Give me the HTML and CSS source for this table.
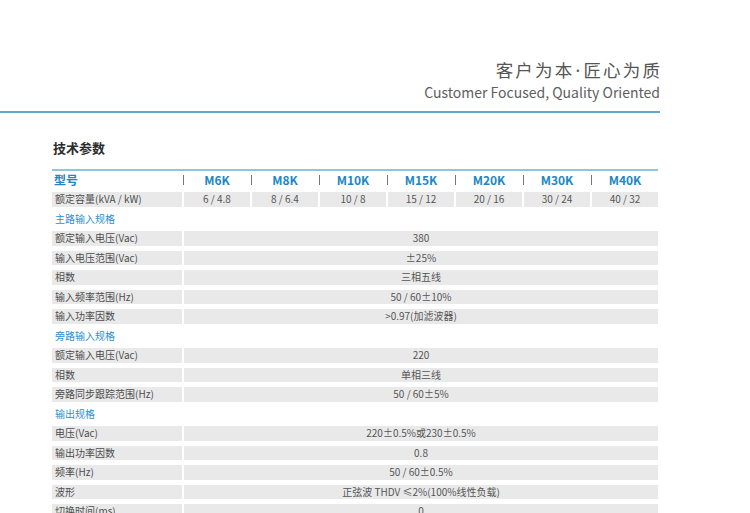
FILE: index.html
```html
<!DOCTYPE html>
<html lang="zh">
<head>
<meta charset="utf-8">
<link rel="stylesheet" href="styles.css">
</head>
<body>
<div class="page">
  <header class="top">
    <div class="slogan-cn">客户为本<span class="dot">·</span>匠心为质</div>
    <div class="slogan-en">Customer Focused, Quality Oriented</div>
  </header>
  <section class="spec">
    <h2 class="title">技术参数</h2>
    <div class="table">
      <div class="head-row">
        <div class="hcell label">型号</div>
        <div class="hcell model">M6K</div>
        <div class="hcell model">M8K</div>
        <div class="hcell model">M10K</div>
        <div class="hcell model">M15K</div>
        <div class="hcell model">M20K</div>
        <div class="hcell model">M30K</div>
        <div class="hcell model">M40K</div>
      </div>
      <div class="body">
        <div class="cell label">额定容量(kVA / kW)</div>
        <div class="cell">6 / 4.8</div>
        <div class="cell">8 / 6.4</div>
        <div class="cell">10 / 8</div>
        <div class="cell">15 / 12</div>
        <div class="cell">20 / 16</div>
        <div class="cell">30 / 24</div>
        <div class="cell">40 / 32</div>

        <div class="section">主路输入规格</div>
        <div class="cell label">额定输入电压(Vac)</div><div class="cell wide">380</div>
        <div class="cell label">输入电压范围(Vac)</div><div class="cell wide">±25%</div>
        <div class="cell label">相数</div><div class="cell wide">三相五线</div>
        <div class="cell label">输入频率范围(Hz)</div><div class="cell wide">50 / 60±10%</div>
        <div class="cell label">输入功率因数</div><div class="cell wide">&gt;0.97(加滤波器)</div>

        <div class="section">旁路输入规格</div>
        <div class="cell label">额定输入电压(Vac)</div><div class="cell wide">220</div>
        <div class="cell label">相数</div><div class="cell wide">单相三线</div>
        <div class="cell label">旁路同步跟踪范围(Hz)</div><div class="cell wide">50 / 60±5%</div>

        <div class="section">输出规格</div>
        <div class="cell label">电压(Vac)</div><div class="cell wide">220±0.5%或230±0.5%</div>
        <div class="cell label">输出功率因数</div><div class="cell wide">0.8</div>
        <div class="cell label">频率(Hz)</div><div class="cell wide">50 / 60±0.5%</div>
        <div class="cell label">波形</div><div class="cell wide">正弦波 THDV ≤2%(100%线性负载)</div>
        <div class="cell label">切换时间(ms)</div><div class="cell wide">0</div>
      </div>
    </div>
  </section>
</div>
</body>
</html>
```

FILE: styles.css
```css
html, body {
  margin: 0;
  padding: 0;
  background: #ffffff;
}
body {
  font-family: "Noto Sans CJK SC", "Noto Sans", sans-serif;
  color: #4a4a4a;
  overflow: hidden;
}
.page {
  width: 658px;
}
.top {
  text-align: right;
  padding-top: 58px;
  padding-bottom: 9px;
  border-bottom: 2px solid #5fa7c6;
  margin-right: -2px;
}
.slogan-cn {
  font-size: 17.5px;
  line-height: 24px;
  color: #555;
  letter-spacing: 2.2px;
  margin-right: -2.2px;
}
.dot {
  font-family: "Noto Sans", sans-serif;
  margin: 0 1px;
}
.slogan-en {
  font-size: 14px;
  line-height: 20px;
  color: #5e5e5e;
}
.spec {
  padding-left: 52px;
}
.title {
  margin: 26px 0 0 1px;
  font-size: 13px;
  line-height: 18px;
  font-weight: bold;
  color: #2b2b2b;
}
.table {
  margin-top: 12px;
  border-top: 2px solid #8cc6df;
}
.head-row, .body {
  display: grid;
  grid-template-columns: 130px repeat(7, 1fr);
  column-gap: 2px;
}
.head-row {
  height: 18px;
  align-items: center;
  margin-bottom: 3px;
}
.hcell {
  font-weight: bold;
  font-size: 12px;
  color: #2186c4;
  line-height: 18px;
}
.hcell.label {
  padding-left: 2px;
}
.hcell.model {
  display: flex;
  align-items: center;
  justify-content: space-between;
}
.hcell.model::before {
  content: "";
  width: 1px;
  height: 10px;
  background: #777;
  margin-left: -1px;
}
.hcell.model::after {
  content: "";
  width: 0;
}
.body {
  grid-auto-rows: 14.5px;
  row-gap: 5px;
}
.cell {
  background: #e9e9ea;
  font-size: 10px;
  line-height: 14.5px;
  text-align: center;
  color: #555;
  white-space: nowrap;
}
.cell.label {
  text-align: left;
  padding-left: 3px;
  color: #4d4d4d;
}
.cell.wide {
  grid-column: 2 / span 7;
}
.section {
  grid-column: 1 / -1;
  font-size: 10px;
  line-height: 14.5px;
  color: #2a90cf;
  padding-left: 3px;
}
```
